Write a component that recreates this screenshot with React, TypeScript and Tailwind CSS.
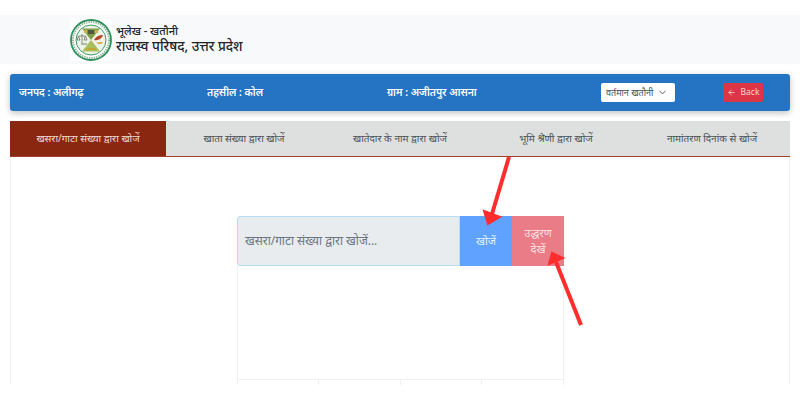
import { ArrowLeft, ChevronDown } from "lucide-react";

const tabs = [
  "खसरा/गाटा संख्या द्वारा खोजें",
  "खाता संख्या द्वारा खोजें",
  "खातेदार के नाम द्वारा खोजें",
  "भूमि श्रेणी द्वारा खोजें",
  "नामांतरण दिनांक से खोजें",
];

function Logo() {
  return (
    <svg width="42" height="42" viewBox="0 0 42 42" className="shrink-0">
      <rect width="42" height="42" fill="#fff" />
      <circle cx="21" cy="21" r="20" fill="#fff" stroke="#2f8f5b" strokeWidth="1.8" />
      <circle cx="21" cy="21" r="18" fill="none" stroke="#8fb79c" strokeWidth="2" strokeDasharray="1.4 1" />
      <circle cx="21" cy="21" r="15" fill="#eef3e8" stroke="#3c9a68" strokeWidth="1" />
      <path d="M12 9.5h18L21 21z" fill="#7e9f45" />
      <path d="M12 32.5h18L21 21z" fill="#a9bf5c" />
      <path d="M18 11h6v4h-6z" fill="#4f5a3f" />
      <path d="M14 11h3v3h-3zM25 11h3v3h-3z" fill="#c9b04a" />
      <path d="M24 21c2-4 6-5 9-5-1 3-4 6-9 5z" fill="#b5452a" />
      <path d="M26 24c2-1 5-1 7-1-1 2-4 3-7 1z" fill="#d9a441" />
      <path d="M12 15v9M8.500 17h7M8.500 17l-1.500 4h3zM15.500 17l-1.500 4h3z" stroke="#6b7a6b" strokeWidth="0.8" fill="none" />
      <path d="M11 25h6" stroke="#6b7a6b" strokeWidth="1" />
      <path d="M16 30h10" stroke="#c9a227" strokeWidth="1.500" />
    </svg>
  );
}

function Arrows() {
  return (
    <svg width="800" height="400" viewBox="0 0 800 400" className="absolute top-0 left-0 pointer-events-none">
      <path d="M509 157L492 214" stroke="#ff2d2d" strokeWidth="4" fill="none" />
      <path d="M484 211L500 217L488 224z" fill="#ff2d2d" stroke="#ff2d2d" strokeWidth="2" />
      <path d="M581 325L556 262" stroke="#ff2d2d" strokeWidth="4" fill="none" />
      <path d="M549 264L563 258L552 253z" fill="#ff2d2d" stroke="#ff2d2d" strokeWidth="2" />
    </svg>
  );
}

export default function App() {
  return (
    <div className="relative w-[800px] h-[400px] overflow-hidden bg-white text-[#212529] font-['Noto_Sans','Liberation_Sans',sans-serif]">
      <div className="h-[15px]" />
      <header className="h-[49px] bg-[#f8f9fa] pl-[70px] flex items-center gap-[4px]">
        <Logo />
        <div className="flex flex-col">
          <span className="text-[11px] leading-[14px] font-medium">भूलेख - खतौनी</span>
          <span className="text-[13.5px] leading-[17px] font-medium">राजस्व परिषद, उत्तर प्रदेश</span>
        </div>
      </header>

      <div className="mx-[10px] mt-[10px] h-[37px] bg-[#2474c3] rounded-[3px] shadow-[0_2px_6px_rgba(0,0,0,0.25)] flex items-center text-white text-[10.25px] font-semibold">
        <span className="ml-[9px] w-[188px]">जनपद : अलीगढ़</span>
        <span className="w-[180px]">तहसील : कोल</span>
        <span className="w-[214px]">ग्राम : अजीतपुर आसना</span>
        <div className="w-[74px] h-[19px] bg-white rounded-[2px] flex items-center justify-between pl-[5px] pr-[7px] text-[9px] font-normal text-[#495057]">
          <span>वर्तमान खतौनी</span>
          <ChevronDown size={11} strokeWidth={2} />
        </div>
        <div className="ml-[48px] w-[40px] h-[19px] bg-[#dc3545] rounded-[2px] flex items-center justify-center gap-[5px] text-[8.5px] font-normal text-[#f8d7da]">
          <ArrowLeft size={9} strokeWidth={2} />
          <span>Back</span>
        </div>
      </div>

      <div className="mx-[10px] mt-[10px] flex flex-col h-[263px] border-x border-[#eef0f2]">
        <div className="h-[36px] bg-[#dee0df] border-b-[1.5px] border-[#a0402a] flex shrink-0 -mx-px text-[10px] text-[#495057]">
          {tabs.map((tab, i) => (
            <div
              key={tab}
              className={
                i === 0
                  ? "w-[156px] bg-[#8a2711] text-[#f3dcd6] flex items-center justify-center pb-[1px]"
                  : "flex-1 flex items-center justify-center pb-[1px]"
              }
            >
              {tab}
            </div>
          ))}
        </div>

        <div className="pt-[59px] pl-[226px]">
          <div className="w-[327px] h-[50px] flex">
            <div className="flex-1 bg-[#e9ecef] border border-[#b6dff0] rounded-l-[3px] flex items-center pl-[7px] text-[11.9px] text-[#6c757d]">
              खसरा/गाटा संख्या द्वारा खोजें...
            </div>
            <div className="w-[52px] bg-[#5fa2ff] text-[#e7f1ff] text-[11px] flex items-center justify-center">
              खोजें
            </div>
            <div className="w-[52px] bg-[#e97c87] text-[#fbe3e5] text-[11px] leading-[16px] text-center flex items-center justify-center">
              उद्धरण
              <br />
              देखें
            </div>
          </div>
          <div className="w-[327px] h-[113px] border-x border-[#eef0f2]" />
          <div className="w-[327px] h-[6px] border-x border-t border-[#eef0f2] grid grid-cols-4 divide-x divide-[#eef0f2]">
            <div />
            <div />
            <div />
            <div />
          </div>
        </div>
      </div>

      <Arrows />
    </div>
  );
}
